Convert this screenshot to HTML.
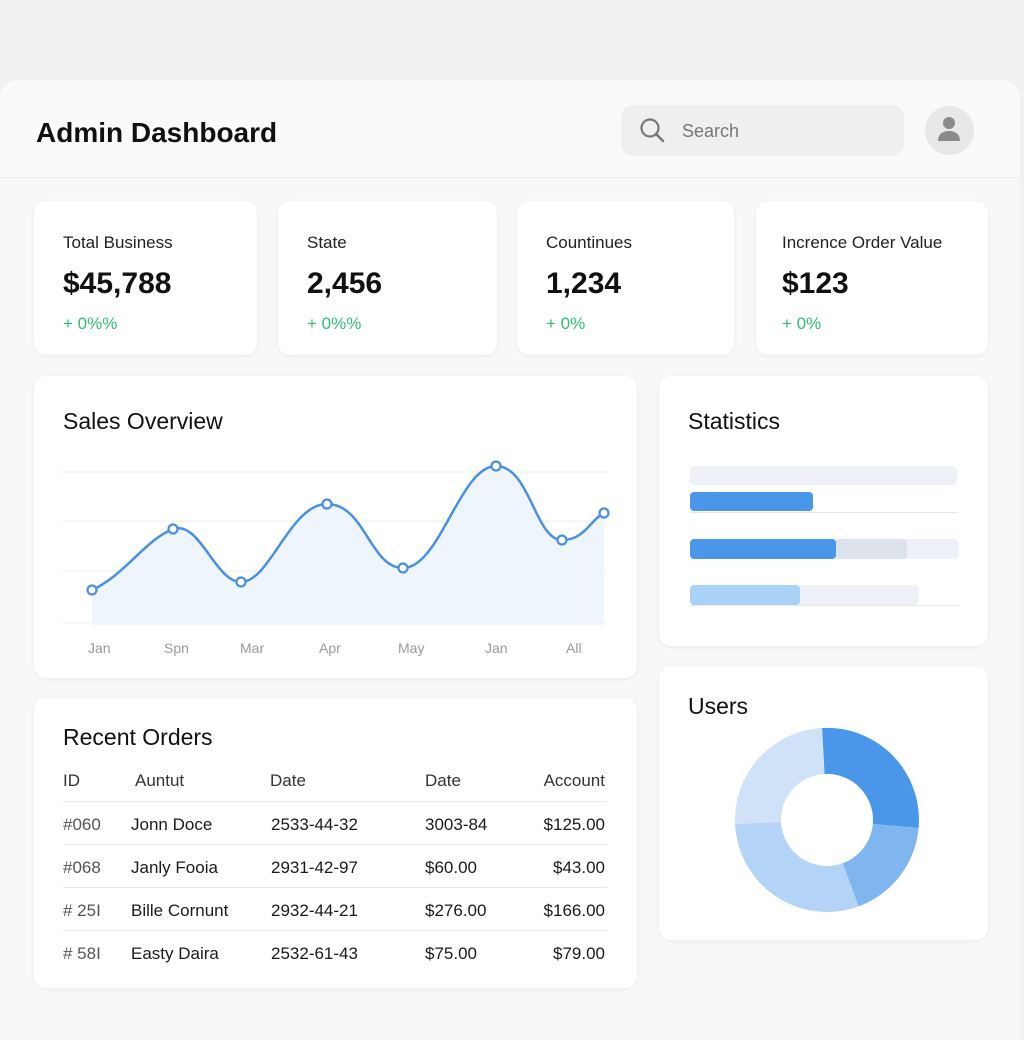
<!DOCTYPE html>
<html><head><style>
*{box-sizing:border-box;margin:0;padding:0}
body{width:1024px;height:1024px;background:#f0f1f3;font-family:"Liberation Sans",sans-serif;color:#1a1a1a;position:relative;overflow:hidden}
.panel{position:absolute;left:0;top:80px;width:1020px;height:960px;background:#f8f8f8;border-radius:18px 18px 0 0}
.hdr{position:absolute;left:0;top:80px;width:1020px;height:98px;border-bottom:1px solid #ececec;background:#fafafa;border-radius:18px 18px 0 0}
.card{position:absolute;background:#fff;border-radius:12px;box-shadow:0 1px 4px rgba(0,0,0,.06)}
.st .l{position:absolute;left:29px;top:32px;font-size:17px;color:#222}
.st .v{position:absolute;left:29px;top:66px;font-size:30px;color:#111;font-weight:bold}
.st .g{position:absolute;left:29px;top:113px;font-size:17px;color:#2fbf71}
.t{position:absolute;font-size:23px;color:#111}
.row{position:absolute;left:29px;width:544px;height:43px;border-top:1px solid #e8e8e8;font-size:17px}
.row span,.th span{position:absolute;top:13px}
.th{position:absolute;left:29px;top:64px;width:544px;font-size:17px;color:#333}
.th span{top:9px}
</style></head><body>
<div class="panel"></div>
<div class="hdr"></div>
<div style="position:absolute;left:36px;top:117px;font-size:28px;font-weight:bold;color:#111">Admin Dashboard</div>
<div style="position:absolute;left:621px;top:105px;width:283px;height:51px;border-radius:12px;background:#efefef"></div>
<svg style="position:absolute;left:638px;top:116px" width="30" height="30" viewBox="0 0 30 30"><circle cx="12" cy="12" r="8.5" fill="none" stroke="#777" stroke-width="2.2"/><path d="M18 18l7 7" stroke="#777" stroke-width="2.6" stroke-linecap="round"/></svg>
<div style="position:absolute;left:682px;top:121px;font-size:18px;color:#777">Search</div>
<div style="position:absolute;left:925px;top:106px;width:49px;height:49px;border-radius:50%;background:#e8e8e8"></div>
<svg style="position:absolute;left:934px;top:114px" width="30" height="32" viewBox="0 0 30 32"><circle cx="15" cy="9" r="6" fill="#8a8a8a"/><path d="M4 27c0-7 5-10 11-10s11 3 11 10z" fill="#8a8a8a"/></svg>

<div class="card st" style="left:34px;top:201px;width:223px;height:154px"><div class="l">Total Business</div><div class="v">$45,788</div><div class="g">+ 0%%</div></div>
<div class="card st" style="left:278px;top:201px;width:219px;height:154px"><div class="l">State</div><div class="v">2,456</div><div class="g">+ 0%%</div></div>
<div class="card st" style="left:517px;top:201px;width:217px;height:154px"><div class="l">Countinues</div><div class="v">1,234</div><div class="g">+ 0%</div></div>
<div class="card st" style="left:756px;top:201px;width:232px;height:154px"><div class="l" style="left:26px">Incrence Order Value</div><div class="v" style="left:26px">$123</div><div class="g" style="left:26px">+ 0%</div></div>

<div class="card" style="left:34px;top:376px;width:603px;height:302px"></div>
<div class="t" style="left:63px;top:408px">Sales Overview</div>
<svg style="position:absolute;left:0;top:0" width="1024" height="1024">
<g stroke="#ececec" stroke-width="1"><line x1="62" y1="472" x2="607" y2="472"/><line x1="62" y1="521" x2="607" y2="521"/><line x1="62" y1="571" x2="607" y2="571"/><line x1="62" y1="623" x2="607" y2="623"/></g>
<path d="M92 590C125 575 145 540 173 529C200 520 215 582 241 582C270 582 290 504 327 504C365 504 370 568 403 568C440 568 460 466 496 466C530 466 535 540 562 540C585 540 590 520 604 513L604 625L92 625Z" fill="#eef5fd"/>
<path d="M92 590C125 575 145 540 173 529C200 520 215 582 241 582C270 582 290 504 327 504C365 504 370 568 403 568C440 568 460 466 496 466C530 466 535 540 562 540C585 540 590 520 604 513" fill="none" stroke="#4a90e2" stroke-width="2.5"/>
<g fill="#fff" stroke="#4a90e2" stroke-width="2.2"><circle cx="92" cy="590" r="4.5"/><circle cx="173" cy="529" r="4.5"/><circle cx="241" cy="582" r="4.5"/><circle cx="327" cy="504" r="4.5"/><circle cx="403" cy="568" r="4.5"/><circle cx="496" cy="466" r="4.5"/><circle cx="562" cy="540" r="4.5"/><circle cx="604" cy="513" r="4.5"/></g>
<g font-size="14" fill="#999" font-family="Liberation Sans"><text x="88" y="653">Jan</text><text x="164" y="653">Spn</text><text x="240" y="653">Mar</text><text x="319" y="653">Apr</text><text x="398" y="653">May</text><text x="485" y="653">Jan</text><text x="566" y="653">All</text></g>
</svg>

<div class="card" style="left:659px;top:376px;width:329px;height:270px"></div>
<div class="t" style="left:688px;top:408px">Statistics</div>
<div style="position:absolute;left:690px;top:466px;width:267px;height:19px;background:#eef2f8;border-radius:5px"></div>
<div style="position:absolute;left:690px;top:492px;width:123px;height:19px;background:#4a97ea;border-radius:4px"></div>
<div style="position:absolute;left:690px;top:512px;width:268px;height:1px;background:#e6e6e6"></div>
<div style="position:absolute;left:690px;top:539px;width:269px;height:20px;background:#eef2f8;border-radius:5px"></div>
<div style="position:absolute;left:835px;top:539px;width:72px;height:20px;background:#dde3ea;border-radius:4px"></div>
<div style="position:absolute;left:690px;top:539px;width:146px;height:20px;background:#4a97ea;border-radius:4px"></div>
<div style="position:absolute;left:690px;top:585px;width:229px;height:20px;background:#eef2f8;border-radius:5px"></div>
<div style="position:absolute;left:690px;top:585px;width:110px;height:20px;background:#a9d2f7;border-radius:4px"></div>
<div style="position:absolute;left:690px;top:605px;width:270px;height:1px;background:#e6e6e6"></div>

<div class="card" style="left:659px;top:666px;width:329px;height:274px"></div>
<div class="t" style="left:688px;top:693px">Users</div>
<svg style="position:absolute;left:727px;top:720px" width="200" height="200" viewBox="-100 -100 200 200">
<path d="M-5,-92 A92,92 0 0 1 91.6,8 L45.8,4 A46,46 0 0 0 -2.5,-46Z" fill="#4a97ea"/>
<path d="M91.6,8 A92,92 0 0 1 31.5,86.4 L15.7,43.2 A46,46 0 0 0 45.8,4Z" fill="#7fb6ef"/>
<path d="M31.5,86.4 A92,92 0 0 1 -91.9,4 L-46,2 A46,46 0 0 0 15.7,43.2Z" fill="#b3d4f6"/>
<path d="M-91.9,4 A92,92 0 0 1 -5,-92 L-2.5,-46 A46,46 0 0 0 -46,2Z" fill="#cfe2f8"/>
</svg>

<div class="card" style="left:34px;top:698px;width:603px;height:290px">
<div class="t" style="left:29px;top:26px;position:absolute">Recent Orders</div>
<div class="th"><span style="left:0">ID</span><span style="left:72px">Auntut</span><span style="left:207px">Date</span><span style="left:362px">Date</span><span style="right:2px">Account</span></div>
<div class="row" style="top:103px"><span style="left:0;color:#555">#060</span><span style="left:68px">Jonn Doce</span><span style="left:208px">2533-44-32</span><span style="left:362px">3003-84</span><span style="right:2px">$125.00</span></div>
<div class="row" style="top:146px"><span style="left:0;color:#555">#068</span><span style="left:68px">Janly Fooia</span><span style="left:208px">2931-42-97</span><span style="left:362px">$60.00</span><span style="right:2px">$43.00</span></div>
<div class="row" style="top:189px"><span style="left:0;color:#555"># 25I</span><span style="left:68px">Bille Cornunt</span><span style="left:208px">2932-44-21</span><span style="left:362px">$276.00</span><span style="right:2px">$166.00</span></div>
<div class="row" style="top:232px"><span style="left:0;color:#555"># 58I</span><span style="left:68px">Easty Daira</span><span style="left:208px">2532-61-43</span><span style="left:362px">$75.00</span><span style="right:2px">$79.00</span></div>
</div>
</body></html>
